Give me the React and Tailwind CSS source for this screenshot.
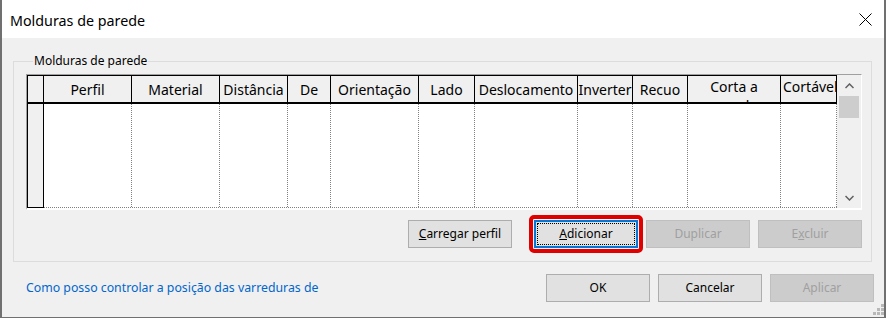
import React from "react";

const columns = [
  { label: "Perfil", w: "w-[88px]" },
  { label: "Material", w: "w-[88px]" },
  { label: "Distância", w: "w-[68px]" },
  { label: "De", w: "w-[43px]" },
  { label: "Orientação", w: "w-[88px]" },
  { label: "Lado", w: "w-[56px]" },
  { label: "Deslocamento", w: "w-[103px]" },
  { label: "Inverter", w: "w-[55px]" },
  { label: "Recuo", w: "w-[55px]" },
  { label: "Corta a parede", w: "w-[93px]", wrap: true },
  { label: "Cortável por inserções", w: "w-[56px]", wrap: true, left: true },
];

const Chevron = ({ down }) => (
  <svg width="9" height="6" viewBox="0 0 9 6">
    <polyline
      points={down ? "0.5,1 4.5,5 8.5,1" : "0.5,5 4.5,1 8.5,5"}
      fill="none"
      stroke="#606060"
      strokeWidth="1.5"
    />
  </svg>
);

// win32-style push button
const Button = ({ children, disabled, focused }) => (
  <button
    type="button"
    disabled={disabled}
    className={
      disabled
        ? "w-[104px] h-[28px] shrink-0 border border-[#bfbfbf] bg-[#cccccc] text-[#a0a0a0] text-[12px] leading-[16px]"
        : focused
        ? "w-[104px] h-[28px] shrink-0 border-2 border-[#0078d7] bg-[#e1e1e1] text-black text-[12px] leading-[16px] outline-1 outline-dotted outline-black outline-offset-[-4px]"
        : "w-[104px] h-[28px] shrink-0 border border-[#adadad] bg-[#e1e1e1] text-black text-[12px] leading-[16px]"
    }
  >
    {children}
  </button>
);

const Grid = () => (
  <div className="flex mt-[5px] border-l border-t border-l-[#a0a0a0] border-t-[#a0a0a0] border-b-2 border-r border-b-white border-r-white">
    <div className="flex flex-col border-l border-black">
      {/* header */}
      <div className="flex h-[29px] border-t border-b-2 border-black bg-[#f0f0f0]">
        <div className="w-[16px] shrink-0 border-r border-black" />
        {columns.map((c) => (
          <div
            key={c.label}
            className={
              c.wrap
                ? c.left
                  ? `${c.w} shrink-0 border-r border-black overflow-hidden pt-[1px] pl-[2px] text-left text-[14px] leading-[19px]`
                  : `${c.w} shrink-0 border-r border-black overflow-hidden pt-[1px] text-center text-[14px] leading-[19px]`
                : `${c.w} shrink-0 border-r border-black overflow-hidden flex items-center justify-center whitespace-nowrap text-[14px] leading-[19px]`
            }
          >
            {c.label}
          </div>
        ))}
      </div>
      {/* body */}
      <div className="flex h-[104px] bg-white border-b border-dotted border-b-[#808080]">
        <div className="w-[16px] shrink-0 border-r border-b border-black bg-[#f0f0f0] -mb-[1px]" />
        {columns.map((c) => (
          <div
            key={c.label}
            className={`${c.w} shrink-0 border-r border-dotted border-[#808080]`}
          />
        ))}
      </div>
    </div>
    {/* scrollbar */}
    <div className="w-[24px] flex flex-col bg-[#f0f0f0]">
      <div className="h-[21px] flex items-center justify-center">
        <Chevron />
      </div>
      <div className="h-[22px] ml-[2px] w-[20px] bg-[#cdcdcd]" />
      <div className="flex-1" />
      <div className="h-[21px] flex items-center justify-center">
        <Chevron down />
      </div>
    </div>
  </div>
);

export default function App() {
  return (
    <div className="relative w-[886px] h-[318px] flex flex-col bg-[#f0f0f0] border-l-2 border-r-2 border-b border-[#707070] font-['Noto_Sans',sans-serif] text-black overflow-hidden">
      <div className="h-[38px] shrink-0 bg-white flex items-center justify-between pl-[8px] pr-[12px] pt-[2px]">
        <span className="text-[14.3px] leading-[19px]">Molduras de parede</span>
        <svg width="13" height="13" viewBox="0 0 13 13" className="-mt-[2px]">
          <path d="M0.5 0.5 L12.5 12.5 M12.5 0.5 L0.5 12.5" stroke="#000" strokeWidth="1" />
        </svg>
      </div>

      <div className="flex-1 flex flex-col pt-[15px]">
        <fieldset className="ml-[11px] mr-[12px] border border-[#dcdcdc] pl-[12px] pr-[9px] pb-[13px]">
          <legend className="ml-[7px] px-[1px] text-[12px] leading-[16px]">Molduras de parede</legend>
          <Grid />
          <div className="flex justify-end items-center gap-[8px] mt-[10px]">
            <div className="mr-[14px]">
              <Button>
                <span className="underline">C</span>arregar perfil
              </Button>
            </div>
            <div className="-m-[5px] p-[1px] border-4 border-[#e00000] rounded-[5px] flex bg-[#f4f4f4]">
              <Button focused>
                <span className="underline">A</span>dicionar
              </Button>
            </div>
            <Button disabled>Duplicar</Button>
            <Button disabled>
              E<span className="underline">x</span>cluir
            </Button>
          </div>
        </fieldset>

        <div className="flex items-center mt-[12px] pl-[24px] pr-[10px]">
          <a className="text-[12.3px] leading-[16px] text-[#0066cc] cursor-pointer">
            Como posso controlar a posição das varreduras de
          </a>
          <div className="flex-1" />
          <div className="flex gap-[8px]">
            <Button>OK</Button>
            <Button>Cancelar</Button>
            <Button disabled>Aplicar</Button>
          </div>
        </div>
      </div>

      <svg width="12" height="12" viewBox="0 0 12 12" className="absolute right-0 bottom-[2px]">
        <rect x="9" y="1" width="3" height="3" fill="#b8b8b8" />
        <rect x="5" y="5" width="3" height="3" fill="#b8b8b8" />
        <rect x="9" y="5" width="3" height="3" fill="#b8b8b8" />
        <rect x="1" y="9" width="3" height="3" fill="#b8b8b8" />
        <rect x="5" y="9" width="3" height="3" fill="#b8b8b8" />
        <rect x="9" y="9" width="3" height="3" fill="#b8b8b8" />
      </svg>
    </div>
  );
}
